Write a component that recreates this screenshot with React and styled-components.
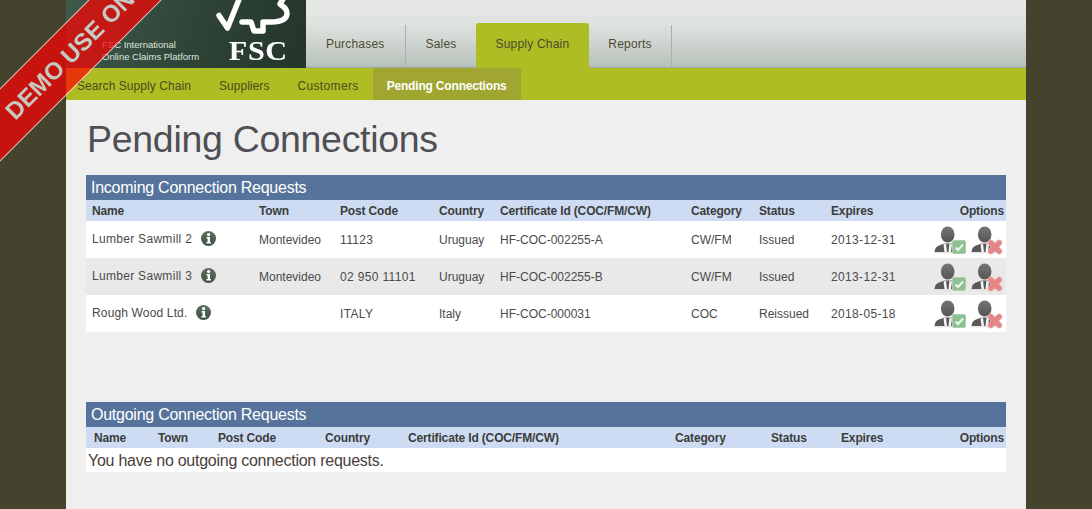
import styled, { createGlobalStyle } from 'styled-components';

const GlobalStyle = createGlobalStyle`
  html, body {
    margin: 0;
    padding: 0;
    height: 100%;
    overflow: hidden;
    background: #45432d;
    font-family: "Liberation Sans", Arial, sans-serif;
  }
`;

const incoming = [
  { name: 'Lumber Sawmill 2', town: 'Montevideo', post: '11123', country: 'Uruguay', cert: 'HF-COC-002255-A', category: 'CW/FM', status: 'Issued', expires: '2013-12-31' },
  { name: 'Lumber Sawmill 3', town: 'Montevideo', post: '02 950 11101', country: 'Uruguay', cert: 'HF-COC-002255-B', category: 'CW/FM', status: 'Issued', expires: '2013-12-31' },
  { name: 'Rough Wood Ltd.', tight: true, town: '', post: 'ITALY', country: 'Italy', cert: 'HF-COC-000031', category: 'COC', status: 'Reissued', expires: '2018-05-18' },
];

const incomingCols = [173, 81, 99, 61, 191, 68, 72, 79, 96];
const outgoingCols = [72, 60, 107, 83, 267, 96, 70, 90, 75];
const headings = ['Name', 'Town', 'Post Code', 'Country', 'Certificate Id (COC/FM/CW)', 'Category', 'Status', 'Expires', 'Options'];

const InfoIcon = () => (
  <InfoSvg viewBox="0 0 15 15">
    <defs>
      <linearGradient id="info" x1="0" y1="0" x2="0" y2="1">
        <stop offset="0" stopColor="#5d7262" />
        <stop offset="1" stopColor="#3e4f43" />
      </linearGradient>
    </defs>
    <circle cx="7.5" cy="7.5" r="7.5" fill="url(#info)" />
    <circle cx="7.6" cy="3.6" r="1.6" fill="#fff" />
    <path d="M5.6 6h3.4v5h1v1.4H5.4V11h1.2V7.400h-1z" fill="#fff" />
  </InfoSvg>
);

const Person = () => (
  <g>
    <defs>
      <linearGradient id="head" x1="0" y1="0" x2="0" y2="1">
        <stop offset="0" stopColor="#757575" />
        <stop offset="1" stopColor="#555" />
      </linearGradient>
    </defs>
    <ellipse cx="14.700" cy="9.500" rx="6.800" ry="8" fill="url(#head)" />
    <path d="M1.500 27c.5-3.500 1.500-5.500 4.500-6.500l5.500-2h6.500l5.500 2c1.500.5 2.500 1.500 3 3V27z" fill="#5a5a5a" />
    <path d="M10.500 19.500l2.500-1 1 8.500h-2.500zM19 19.500l-2.500-1-1 8.500H18z" fill="#f5f5f5" />
    <path d="M1 27.800h25" stroke="#dcdcdc" strokeWidth="1" />
  </g>
);

const AcceptIcon = () => (
  <ActionSvg viewBox="0 0 34 30">
    <Person />
    <rect x="19.500" y="15.500" width="13" height="13" rx="1.500" fill="#8fbf93" stroke="#a9d0ac" />
    <path d="M22.500 22.500l2.500 2.500 5-5.500" fill="none" stroke="#eef6ee" strokeWidth="2" />
  </ActionSvg>
);

const RejectIcon = () => (
  <ActionSvg viewBox="0 0 34 30">
    <Person />
    <path d="M20.800 17.800l8.400 8.400M29.200 17.800l-8.400 8.400" fill="none" stroke="#f0b4b4" strokeWidth="6.200" strokeLinecap="round" />
    <path d="M20.800 17.800l8.400 8.400M29.200 17.800l-8.400 8.400" fill="none" stroke="#e58585" strokeWidth="4.800" strokeLinecap="round" />
  </ActionSvg>
);

const ConnectionTable = ({ cols, compact, children }) => (
  <Table>
    <colgroup>
      {cols.map((width, i) => (
        <col key={i} style={{ width }} />
      ))}
    </colgroup>
    <thead>
      <tr>
        {headings.map((heading, i) => (
          <HeadCell key={heading} $right={heading === 'Options'} $compact={compact} $first={i === 0}>
            {heading}
          </HeadCell>
        ))}
      </tr>
    </thead>
    <tbody>{children}</tbody>
  </Table>
);

const App = () => (
  <Viewport>
    <GlobalStyle />
    <Page>
      <Header>
        <Logo>
          <LogoText>
            FSC International
            <br />
            Online Claims Platform
          </LogoText>
          <LogoMark>
            <TreeSvg viewBox="0 0 76 41">
              <path
                d="M3 15.500l8.500 12.500L24 -3M26 22h9l3 9h9v-9h8c10 0 16-3 16-9 0-5-5-7-7-9l3-5"
                fill="none"
                stroke="#fff"
                strokeWidth="5.500"
                strokeLinejoin="round"
                strokeLinecap="round"
              />
            </TreeSvg>
            <LogoName>FSC</LogoName>
          </LogoMark>
        </Logo>
        <Tabs>
          <Tab>Purchases</Tab>
          <Tab>Sales</Tab>
          <Tab $active>Supply Chain</Tab>
          <Tab>Reports</Tab>
        </Tabs>
      </Header>
      <SubNav>
        <SubItem>Search Supply Chain</SubItem>
        <SubItem>Suppliers</SubItem>
        <SubItem>Customers</SubItem>
        <SubItem $active>Pending Connections</SubItem>
      </SubNav>
      <Content>
        <Title>Pending Connections</Title>
        <Section>
          <SectionTitle>Incoming Connection Requests</SectionTitle>
          <ConnectionTable cols={incomingCols}>
            {incoming.map((row) => (
              <Row key={row.cert}>
                <NameCell $tight={row.tight}>
                  <NameWrap>
                    {row.name}
                    <InfoIcon />
                  </NameWrap>
                </NameCell>
                <Cell>{row.town}</Cell>
                <NumberCell>{row.post}</NumberCell>
                <Cell>{row.country}</Cell>
                <Cell>{row.cert}</Cell>
                <Cell>{row.category}</Cell>
                <Cell>{row.status}</Cell>
                <NumberCell>{row.expires}</NumberCell>
                <OptionsCell>
                  <Options>
                    <AcceptIcon />
                    <RejectIcon />
                  </Options>
                </OptionsCell>
              </Row>
            ))}
          </ConnectionTable>
        </Section>
        <Section $outgoing>
          <SectionTitle>Outgoing Connection Requests</SectionTitle>
          <ConnectionTable cols={outgoingCols} compact />
          <EmptyMessage>You have no outgoing connection requests.</EmptyMessage>
        </Section>
      </Content>
    </Page>
    <Ribbon>DEMO USE ONLY</Ribbon>
  </Viewport>
);

const Viewport = styled.div`
  position: relative;
  height: 509px;
  overflow: hidden;
`;

const Page = styled.div`
  width: 960px;
  height: 509px;
  margin: 0 auto;
  background: #efefef;
`;

const Header = styled.header`
  display: flex;
  height: 68px;
  background: linear-gradient(#e7e9e6 0, #dfe3df 35%, #b9c2bc 97%, #98a19c 100%);
`;

const Logo = styled.div`
  display: flex;
  justify-content: space-between;
  width: 240px;
  height: 68px;
  box-sizing: border-box;
  padding: 0 14px 0 36px;
  background: linear-gradient(105deg, #3f5b4b 0, #2f4537 50%, #24352a 100%);
  overflow: hidden;
`;

const LogoText = styled.div`
  align-self: flex-end;
  margin-bottom: 5px;
  font-size: 9.5px;
  line-height: 12px;
  color: #dfe5df;
  white-space: nowrap;
`;

const LogoMark = styled.div`
  display: flex;
  flex-direction: column;
  align-items: center;
  width: 76px;
`;

const TreeSvg = styled.svg`
  width: 76px;
  height: 41px;
  flex: none;
`;

const LogoName = styled.div`
  font-family: "Liberation Serif", "Times New Roman", serif;
  font-weight: 700;
  font-size: 27px;
  line-height: 21px;
  letter-spacing: 0.5px;
  color: #fff;
  margin-left: 9px;
  transform: scaleX(1.12);
`;

const Tabs = styled.nav`
  display: flex;
  align-items: flex-end;
`;

const Tab = styled.div`
  height: ${(p) => (p.$active ? 45 : 43)}px;
  line-height: ${(p) => (p.$active ? 43 : 39)}px;
  padding: 0 20px 0 ${(p) => (p.$active ? 20 : 19)}px;
  font-size: 12px;
  letter-spacing: 0.2px;
  color: #4a4a32;
  background: ${(p) => (p.$active ? '#aebd23' : 'transparent')};
  border-radius: ${(p) => (p.$active ? '3px 3px 0 0' : '0')};
  border-right: ${(p) => (p.$active ? 'none' : '1px solid #a9b1ac')};

  &:first-child {
    padding-left: 20px;
  }

  &:nth-child(2) {
    padding: 0 19px 0 20px;
    border-right: none;
  }

  &:last-child {
    padding-right: 19px;
  }
`;

const SubNav = styled.nav`
  display: flex;
  height: 32px;
  background: #aebd23;
`;

const SubItem = styled.div`
  padding: 0 14px;
  line-height: 36px;
  height: 32px;
  font-size: 12px;
  letter-spacing: ${(p) => (p.$active ? -0.18 : 0.06)}px;
  font-weight: ${(p) => (p.$active ? 700 : 400)};
  color: ${(p) => (p.$active ? '#fff' : '#4d4a1e')};
  background: ${(p) => (p.$active ? '#a0a630' : 'transparent')};

  &:first-child {
    margin-left: -3px;
  }

  &:nth-child(3) {
    letter-spacing: 0.35px;
  }
`;

const Content = styled.main`
  padding: 0 20px;
`;

const Title = styled.h1`
  margin: 0;
  height: 75px;
  padding: 15px 0 0 1px;
  box-sizing: border-box;
  font-size: 37.5px;
  line-height: 48px;
  font-weight: 400;
  letter-spacing: -0.3px;
  color: #4f4f55;
`;

const Section = styled.section`
  margin-top: ${(p) => (p.$outgoing ? 70 : 0)}px;
`;

const SectionTitle = styled.h2`
  margin: 0;
  height: 25px;
  padding-left: 5px;
  font-size: 16px;
  line-height: 25px;
  letter-spacing: -0.25px;
  font-weight: 400;
  color: #fff;
  background: #56739b;
`;

const Table = styled.table`
  width: 920px;
  border-collapse: collapse;
  table-layout: fixed;
`;

const HeadCell = styled.th`
  height: 21px;
  padding: 0 ${(p) => (p.$right ? 2 : 0)}px 0 ${(p) => (p.$first ? (p.$compact ? 8 : 6) : 0)}px;
  font-size: 12px;
  font-weight: 700;
  letter-spacing: -0.15px;
  text-align: ${(p) => (p.$right ? 'right' : 'left')};
  color: #3c3c3c;
  background: #cddcf2;
  white-space: nowrap;
`;

const Row = styled.tr`
  height: 37px;
  background: #fff;

  &:nth-child(even) {
    background: #e9e9e9;
  }
`;

const Cell = styled.td`
  padding: 0;
  font-size: 12px;
  color: #4a4a4a;
  white-space: nowrap;
`;

const NumberCell = styled(Cell)`
  letter-spacing: 0.35px;
`;

const NameCell = styled(Cell)`
  padding-left: 6px;
  letter-spacing: ${(p) => (p.$tight ? 0.15 : 0.3)}px;
`;

const NameWrap = styled.div`
  display: flex;
  align-items: center;
  gap: 9px;
  margin-top: -2px;
`;

const InfoSvg = styled.svg`
  width: 15px;
  height: 15px;
  flex: none;
`;

const OptionsCell = styled(Cell)`
  padding-right: 2px;
`;

const Options = styled.div`
  display: flex;
  justify-content: flex-end;
  gap: 3px;
`;

const ActionSvg = styled.svg`
  width: 34px;
  height: 30px;
  flex: none;
  filter: blur(0.3px);
`;

const EmptyMessage = styled.div`
  height: 24px;
  padding-left: 2px;
  font-size: 16px;
  line-height: 25px;
  letter-spacing: -0.26px;
  color: #4a4038;
  background: #fff;
`;

const Ribbon = styled.div`
  position: absolute;
  left: -70px;
  top: 19px;
  width: 300px;
  height: 52px;
  box-sizing: border-box;
  border: 1px solid #fff;
  background: #f00;
  opacity: 0.7;
  transform: rotate(-45deg);
  font-size: 24px;
  font-weight: 700;
  line-height: 50px;
  text-align: center;
  color: #fff;
  white-space: nowrap;
`;

export default App;
